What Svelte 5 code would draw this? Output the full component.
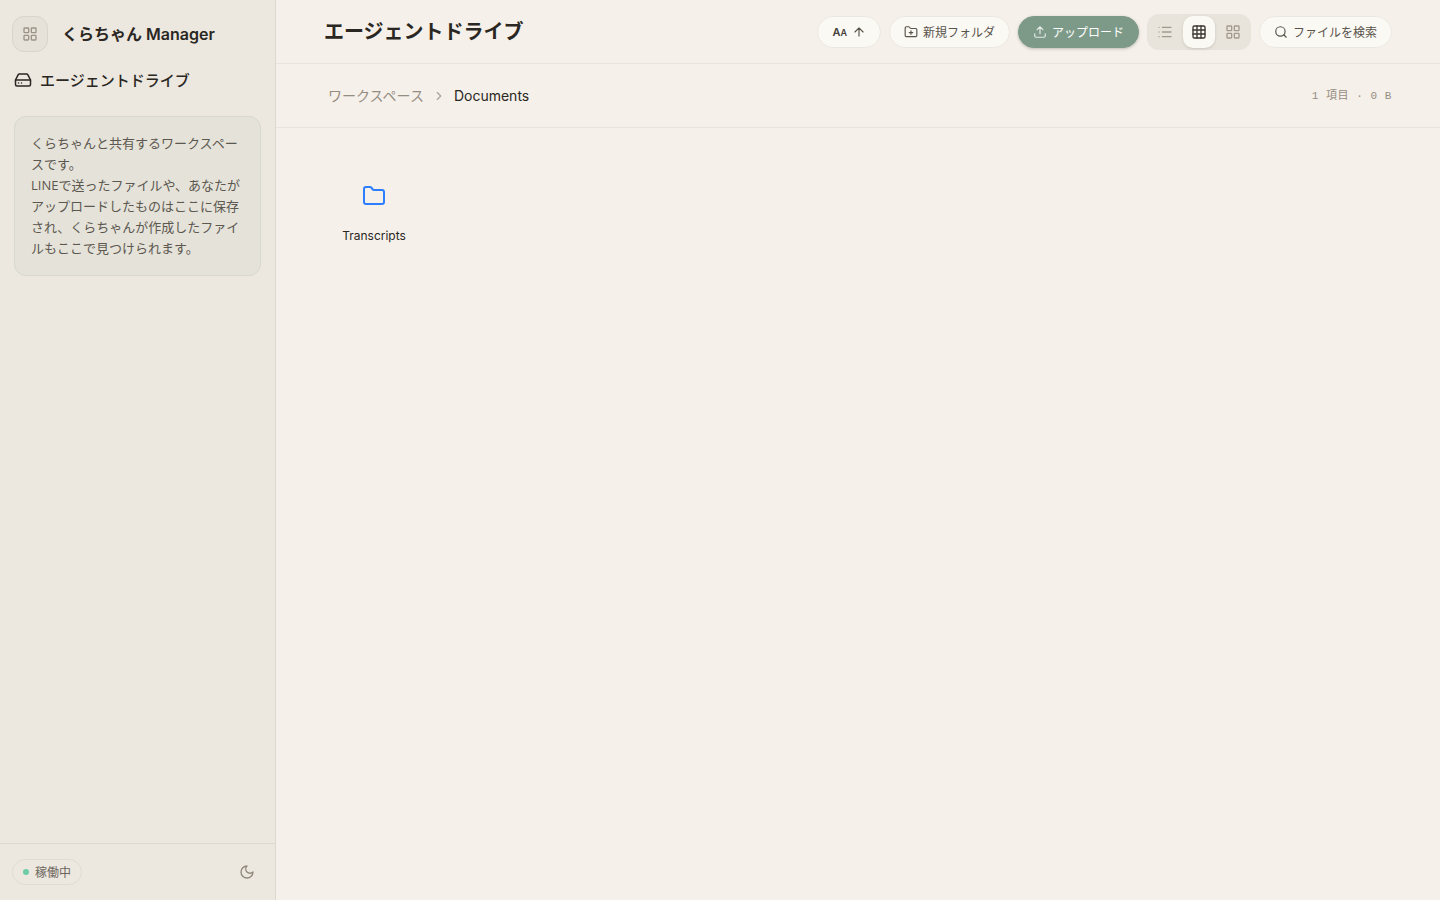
<script lang="ts">
  type ViewMode = "list" | "grid" | "large";

  const views: { id: ViewMode; label: string }[] = [
    { id: "list", label: "リスト" },
    { id: "grid", label: "グリッド" },
    { id: "large", label: "大きいアイコン" },
  ];

  const folders = ["Transcripts"];

  let view = $state<ViewMode>("grid");
  let ascending = $state(true);
</script>

{#snippet tiles()}
  <rect x="3" y="3" width="7" height="7" rx="1" />
  <rect x="14" y="3" width="7" height="7" rx="1" />
  <rect x="14" y="14" width="7" height="7" rx="1" />
  <rect x="3" y="14" width="7" height="7" rx="1" />
{/snippet}

{#snippet folderShape()}
  <path d="M20 20a2 2 0 0 0 2-2V8a2 2 0 0 0-2-2h-7.9a2 2 0 0 1-1.69-.9L9.6 3.9A2 2 0 0 0 7.93 3H4a2 2 0 0 0-2 2v13a2 2 0 0 0 2 2Z" />
{/snippet}

<div class="app">
  <aside class="sidebar">
    <div class="brand">
      <button class="apps-btn" aria-label="アプリ一覧">
        <svg class="icon" width="16" height="16" viewBox="0 0 24 24">{@render tiles()}</svg>
      </button>
      <span class="brand-name">くらちゃん Manager</span>
    </div>
    <h2 class="section-title">
      <svg class="icon" width="18" height="18" viewBox="0 0 24 24">
        <path d="M22 12H2" />
        <path d="M5.45 5.11 2 12v6a2 2 0 0 0 2 2h16a2 2 0 0 0 2-2v-6l-3.45-6.89A2 2 0 0 0 16.76 4H7.24a2 2 0 0 0-1.79 1.11z" />
        <path d="M6 16h.01M10 16h.01" />
      </svg>
      エージェントドライブ
    </h2>
    <p class="intro">
      くらちゃんと共有するワークスペースです。<br />LINEで送ったファイルや、あなたがアップロードしたものはここに保存され、くらちゃんが作成したファイルもここで見つけられます。
    </p>
    <footer class="sidebar-footer">
      <span class="status"><span class="dot"></span>稼働中</span>
      <button class="theme-btn" aria-label="ダークモード">
        <svg class="icon" width="16" height="16" viewBox="0 0 24 24">
          <path d="M12 3a6 6 0 0 0 9 9 9 9 0 1 1-9-9Z" />
        </svg>
      </button>
    </footer>
  </aside>

  <main class="content">
    <header class="toolbar">
      <h1>エージェントドライブ</h1>
      <div class="actions">
        <button class="pill sort" aria-label="名前で並べ替え" onclick={() => (ascending = !ascending)}>
          <span class="sort-label">A<small>A</small></span>
          <svg class="icon" class:flipped={!ascending} width="14" height="14" viewBox="0 0 24 24">
            <path d="m5 12 7-7 7 7M12 19V5" />
          </svg>
        </button>
        <button class="pill">
          <svg class="icon" width="14" height="14" viewBox="0 0 24 24">
            <path d="M12 10v6M9 13h6" />
            {@render folderShape()}
          </svg>
          新規フォルダ
        </button>
        <button class="pill upload">
          <svg class="icon" width="14" height="14" viewBox="0 0 24 24">
            <path d="M21 15v4a2 2 0 0 1-2 2H5a2 2 0 0 1-2-2v-4M17 8l-5-5-5 5M12 3v12" />
          </svg>
          アップロード
        </button>
        <div class="view-switch">
          {#each views as v}
            <button
              class:active={view === v.id}
              aria-label={v.label}
              aria-pressed={view === v.id}
              onclick={() => (view = v.id)}
            >
              <svg class="icon" width="16" height="16" viewBox="0 0 24 24">
                {#if v.id === "list"}
                  <path d="M8 5h13M8 12h13M8 19h13M3 5h.01M3 12h.01M3 19h.01" />
                {:else if v.id === "grid"}
                  <rect x="3" y="3" width="18" height="18" rx="2" />
                  <path d="M3 9h18M3 15h18M9 3v18M15 3v18" />
                {:else}
                  {@render tiles()}
                {/if}
              </svg>
            </button>
          {/each}
        </div>
        <button class="pill">
          <svg class="icon" width="14" height="14" viewBox="0 0 24 24">
            <circle cx="11" cy="11" r="8" />
            <path d="m21 21-4.3-4.3" />
          </svg>
          ファイルを検索
        </button>
      </div>
    </header>

    <div class="path-bar">
      <nav class="breadcrumb" aria-label="パス">
        <a href="#workspace">ワークスペース</a>
        <svg class="icon" width="14" height="14" viewBox="0 0 24 24"><path d="m9 18 6-6-6-6" /></svg>
        <span class="current" aria-current="page">Documents</span>
      </nav>
      <span class="summary">{folders.length} 項目 · 0 B</span>
    </div>

    <div class="files">
      {#each folders as name}
        <button class="file">
          <svg class="icon" width="24" height="24" viewBox="0 0 24 24">{@render folderShape()}</svg>
          <span>{name}</span>
        </button>
      {/each}
    </div>
  </main>
</div>

<style>
  :global(body) {
    margin: 0;
    background: #f5f0ea;
  }
  .app {
    display: flex;
    min-height: 100vh;
    font-family: "Open Sans", "Noto Sans CJK JP", sans-serif;
    color: #2a2723;
  }
  .app * {
    box-sizing: border-box;
  }
  button {
    font-family: inherit;
    border: none;
    background: none;
    padding: 0;
    cursor: pointer;
  }
  .icon {
    flex-shrink: 0;
    fill: none;
    stroke: currentColor;
    stroke-width: 2;
    stroke-linecap: round;
    stroke-linejoin: round;
  }

  .sidebar {
    display: flex;
    flex-direction: column;
    width: 276px;
    flex-shrink: 0;
    background: #ece7df;
    border-right: 1px solid #dcd8d0;
  }
  .brand {
    display: flex;
    align-items: center;
    gap: 14px;
    padding: 16px 12px 0;
  }
  .apps-btn {
    display: grid;
    place-items: center;
    width: 36px;
    height: 36px;
    border: 1px solid #d9d5cc;
    border-radius: 12px;
    background: #e6e2d9;
    color: #9c9486;
  }
  .brand-name {
    font-family: Inter, "Noto Sans CJK JP", sans-serif;
    font-size: 16px;
    font-weight: 600;
    line-height: 24px;
  }
  .section-title {
    display: flex;
    align-items: center;
    gap: 8px;
    margin: 16px 14px 0;
    font-size: 15px;
    font-weight: 500;
    line-height: 24px;
  }
  .intro {
    margin: 24px 14px;
    padding: 16px;
    border: 1px solid #d7d9cd;
    border-radius: 12px;
    background: #e4e2d9;
    color: #5c574f;
    font-size: 13px;
    line-height: 21px;
  }
  .sidebar-footer {
    display: flex;
    align-items: center;
    justify-content: space-between;
    margin-top: auto;
    padding: 12px;
    border-top: 1px solid #dcd8d0;
  }
  .status {
    display: flex;
    align-items: center;
    gap: 6px;
    height: 26px;
    padding: 0 10px;
    border: 1px solid #e0dbd3;
    border-radius: 13px;
    color: #6b655c;
    font-size: 12px;
  }
  .dot {
    width: 6px;
    height: 6px;
    border-radius: 50%;
    background: #6dcca5;
  }
  .theme-btn {
    display: grid;
    place-items: center;
    width: 32px;
    height: 32px;
    color: #8f887b;
  }

  .content {
    flex: 1;
    min-width: 0;
  }
  .toolbar,
  .path-bar {
    display: flex;
    align-items: center;
    justify-content: space-between;
    height: 64px;
    padding: 0 48px;
    border-bottom: 1px solid #e8e3dc;
  }
  h1 {
    margin: 0;
    font-size: 20px;
    font-weight: 700;
    line-height: 28px;
  }
  .actions {
    display: flex;
    align-items: center;
    gap: 8px;
  }
  .pill {
    display: flex;
    align-items: center;
    gap: 5px;
    height: 32px;
    padding: 0 14px;
    border: 1px solid #ece8e1;
    border-radius: 16px;
    background: #fbf9f4;
    color: #58534b;
    font-size: 12px;
    white-space: nowrap;
  }
  .sort-label {
    color: #45413b;
    font-family: Inter, sans-serif;
    font-size: 11px;
    font-weight: 600;
  }
  .sort-label small {
    font-size: 9px;
  }
  .flipped {
    transform: rotate(180deg);
  }
  .upload {
    border-color: #7d9a89;
    background: #7d9a89;
    color: #fff;
    box-shadow: 0 1px 3px rgba(60, 70, 60, 0.3);
  }
  .upload .icon {
    opacity: 0.8;
  }
  .view-switch {
    display: flex;
    gap: 2px;
    padding: 2px;
    border-radius: 12px;
    background: #e8e4dc;
  }
  .view-switch button {
    display: grid;
    place-items: center;
    width: 32px;
    height: 32px;
    border-radius: 10px;
    color: #a29a8e;
  }
  .view-switch .active {
    background: #fbf9f4;
    color: #3a3630;
    box-shadow: 0 1px 3px rgba(60, 50, 40, 0.16);
  }

  .breadcrumb {
    display: flex;
    align-items: center;
    gap: 8px;
    padding-left: 4px;
    font-size: 14px;
    line-height: 20px;
    color: #aaa297;
  }
  .breadcrumb a {
    color: #958d82;
    text-decoration: none;
  }
  .current {
    color: #2a2723;
    font-family: Inter, sans-serif;
  }
  .summary {
    color: #958d82;
    font-family: "Liberation Mono", "Noto Sans CJK JP", monospace;
    font-size: 11px;
    line-height: 16px;
    letter-spacing: 0.05em;
  }

  .files {
    display: flex;
    flex-wrap: wrap;
    gap: 16px;
    padding: 32px 48px;
  }
  .file {
    display: flex;
    flex-direction: column;
    align-items: center;
    gap: 20px;
    width: 100px;
    padding: 24px 8px 12px;
    color: #2a2723;
    font-family: Inter, sans-serif;
    font-size: 12px;
    line-height: 16px;
  }
  .file .icon {
    color: #2b7fff;
  }
</style>
